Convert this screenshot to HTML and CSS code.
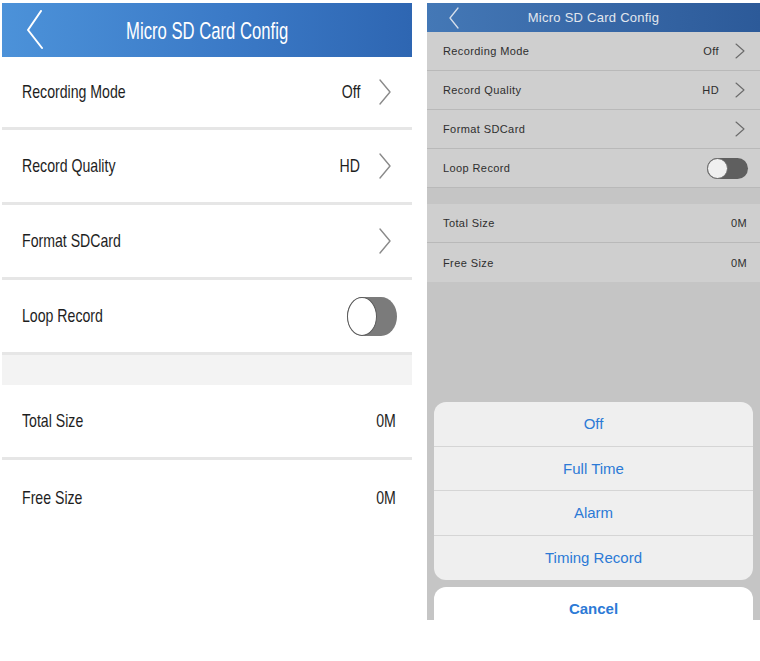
FILE: index.html
```html
<!DOCTYPE html>
<html lang="en">

<head>
    <meta charset="UTF-8">
    <meta name="viewport" content="width=device-width, initial-scale=1.0">
    <title>Micro SD Card Config</title>
    <link rel="stylesheet" href="styles.css">
</head>

<body>
    <!-- left phone: plain settings screen -->
    <div class="phone big">
        <div class="nav">
            <svg class="back" width="20" height="40" viewBox="0 0 20 40"><path d="M16 1 L3 20 L17 38" /></svg>
            <div class="title"><span class="sq mid">Micro SD Card Config</span></div>
            <div></div>
        </div>
        <ul class="list top">
            <li class="row">
                <span class="sq">Recording Mode</span>
                <div class="right"><span class="sq val">Off</span>
                    <svg class="arrow" width="14" height="26" viewBox="0 0 14 26"><path d="M2 1 L12 13 L2 25" /></svg>
                </div>
            </li>
            <li class="row">
                <span class="sq">Record Quality</span>
                <div class="right"><span class="sq val">HD</span>
                    <svg class="arrow" width="14" height="26" viewBox="0 0 14 26"><path d="M2 1 L12 13 L2 25" /></svg>
                </div>
            </li>
            <li class="row">
                <span class="sq">Format SDCard</span>
                <div class="right">
                    <svg class="arrow" width="14" height="26" viewBox="0 0 14 26"><path d="M2 1 L12 13 L2 25" /></svg>
                </div>
            </li>
            <li class="row">
                <span class="sq">Loop Record</span>
                <div class="switch"><div class="knob"></div></div>
            </li>
        </ul>
        <div class="gap"></div>
        <ul class="list">
            <li class="row">
                <span class="sq">Total Size</span>
                <span class="sq val plain">0M</span>
            </li>
            <li class="row last">
                <span class="sq">Free Size</span>
                <span class="sq val plain">0M</span>
            </li>
        </ul>
    </div>

    <!-- right phone: same screen with action sheet open -->
    <div class="phone small">
        <div class="nav">
            <svg class="back" width="12" height="22" viewBox="0 0 12 22"><path d="M10 1 L2 11 L10 21" /></svg>
            <div class="title">Micro SD Card Config</div>
            <div></div>
        </div>
        <ul class="list">
            <li class="row">
                <span>Recording Mode</span>
                <div class="right"><span class="val">Off</span>
                    <svg class="arrow" width="10" height="16" viewBox="0 0 10 16"><path d="M1 1 L9 8 L1 15" /></svg>
                </div>
            </li>
            <li class="row">
                <span>Record Quality</span>
                <div class="right"><span class="val">HD</span>
                    <svg class="arrow" width="10" height="16" viewBox="0 0 10 16"><path d="M1 1 L9 8 L1 15" /></svg>
                </div>
            </li>
            <li class="row">
                <span>Format SDCard</span>
                <div class="right">
                    <svg class="arrow" width="10" height="16" viewBox="0 0 10 16"><path d="M1 1 L9 8 L1 15" /></svg>
                </div>
            </li>
            <li class="row">
                <span>Loop Record</span>
                <div class="switch"><div class="knob"></div></div>
            </li>
        </ul>
        <div class="gap"></div>
        <ul class="list">
            <li class="row">
                <span>Total Size</span>
                <span class="val plain">0M</span>
            </li>
            <li class="row last">
                <span>Free Size</span>
                <span class="val plain">0M</span>
            </li>
        </ul>

        <div class="sheet">
            <ul class="options">
                <li>Off</li>
                <li>Full Time</li>
                <li>Alarm</li>
                <li>Timing Record</li>
            </ul>
            <div class="cancel">Cancel</div>
        </div>
    </div>
</body>

</html>
```

FILE: styles.css
```css
* {
    margin: 0;
    padding: 0;
    box-sizing: border-box;
}

body {
    width: 760px;
    height: 661px;
    background-color: #fff;
    font-family: "Liberation Sans", Arial, sans-serif;
    display: flex;
    align-items: flex-start;
    gap: 15px;
    padding: 3px 0 0 2px;
}

li {
    list-style: none;
}

.phone {
    display: flex;
    flex-direction: column;
}

.nav {
    display: grid;
    grid-template-columns: 1fr auto 1fr;
    align-items: center;
}

.back path,
.arrow path {
    fill: none;
    stroke-linecap: round;
    stroke-linejoin: round;
}

.row {
    display: flex;
    align-items: center;
    justify-content: space-between;
}

.right {
    display: flex;
    align-items: center;
}

/* text of the big screenshot is squeezed sideways */
.sq {
    display: inline-block;
    transform: scaleX(0.76);
    transform-origin: left center;
    white-space: nowrap;
}

.sq.val {
    transform-origin: right center;
}

.sq.mid {
    transform: scaleX(0.68);
    transform-origin: center center;
}

/* ---------- left ---------- */

.big {
    width: 410px;
}

.big .nav {
    height: 54px;
    background: linear-gradient(90deg, #4c92d9, #3b7ac7 55%, #2e66b2);
}

.big .back {
    margin-left: 23px;
}

.big .back path {
    stroke: #fff;
    stroke-width: 2;
}

.big .title {
    color: #fff;
    font-size: 24.5px;
    padding-top: 2px;
}

.big .row {
    height: 75px;
    border-bottom: 3px solid #e6e6e6;
    padding: 0 16px 0 20px;
    font-size: 18.6px;
    color: #1e1e1e;
}

.big .top .row:first-child {
    height: 73px;
}

.big .row.last {
    border-bottom: none;
}

.big .arrow {
    margin: 0 4px 0 18px;
}

.big .arrow path {
    stroke: #8a8a8a;
    stroke-width: 1.4;
}

.big .gap {
    height: 30px;
    background-color: #f3f3f3;
}

.big .switch {
    width: 50px;
    height: 39px;
    border-radius: 16px / 19.5px;
    background-color: #7b7b7b;
    margin-right: -1px;
}

.big .knob {
    width: 30px;
    height: 39px;
    border-radius: 50%;
    background-color: #fff;
    border: 1.5px solid #5a5a5a;
}

/* ---------- right (dimmed, sheet open) ---------- */

.small {
    width: 333px;
    height: 617px;
    background-color: #c5c5c5;
    overflow: hidden;
}

.small .nav {
    height: 29px;
    background: linear-gradient(90deg, #4478b6, #3767a6 55%, #2c5a99);
}

.small .back {
    margin-left: 21px;
}

.small .back path {
    stroke: #d6dfeb;
    stroke-width: 1.3;
}

.small .title {
    color: #e2e7ee;
    font-size: 13px;
    letter-spacing: 0.25px;
}

.small .row {
    height: 39px;
    background-color: #cfcfcf;
    border-bottom: 1px solid #b9b9b9;
    padding: 0 13px 0 16px;
    font-size: 11px;
    letter-spacing: 0.4px;
    color: #2e2e2e;
}

.small .row.last {
    border-bottom: none;
}

.small .arrow {
    margin: 0 2px 0 16px;
}

.small .arrow path {
    stroke: #6a6a6a;
    stroke-width: 1.1;
}

.small .gap {
    height: 16px;
}

.small .switch {
    width: 41px;
    height: 21px;
    border-radius: 11px;
    background-color: #5f5f5f;
    margin-right: -1px;
}

.small .knob {
    width: 21px;
    height: 21px;
    border-radius: 50%;
    background-color: #f0f0f0;
    border: 1px solid #6a6a6a;
}

.sheet {
    margin-top: auto;
    padding: 0 7px;
    display: flex;
    flex-direction: column;
    gap: 7px;
}

.options {
    background-color: #efefef;
    border-radius: 12px;
    overflow: hidden;
}

.options li {
    height: 44.5px;
    display: flex;
    align-items: center;
    justify-content: center;
    border-bottom: 1px solid #d5d5d5;
    font-size: 15px;
    color: #2c7ad6;
}

.options li:last-child {
    border-bottom: none;
}

.cancel {
    height: 33px;
    background-color: #fff;
    border-radius: 12px 12px 0 0;
    text-align: center;
    padding-top: 13px;
    font-size: 15px;
    line-height: 18px;
    font-weight: bold;
    color: #2c7ad6;
}
```
